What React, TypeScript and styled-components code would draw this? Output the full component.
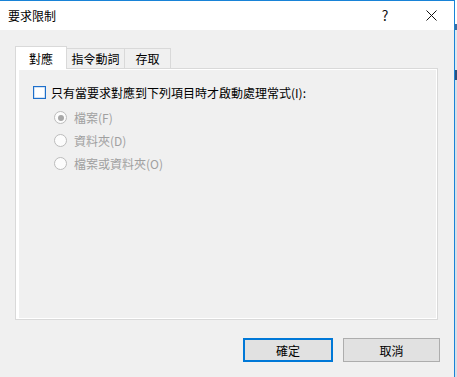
import React from 'react';
import styled, {createGlobalStyle} from "styled-components";

const GlobalStyle = createGlobalStyle`
  html, body {
    margin: 0;
    padding: 0;
    background: #f0f0f0;
  }
  * {
    box-sizing: border-box;
  }
`

const font = `"Segoe UI", "Noto Sans CJK TC", "Noto Sans", sans-serif`

export default function App() {
    return (
        <>
            <GlobalStyle/>
            <Screen>
                <Dialog>
                    <TitleBar>
                        <Title>要求限制</Title>
                        <CaptionButton>?</CaptionButton>
                        <CaptionButton>
                            <svg width="11" height="11" viewBox="0 0 11 11">
                                <path d="M0.5 0.5 L10.5 10.5 M10.5 0.5 L0.5 10.5" stroke="#111" strokeWidth="1" fill="none"/>
                            </svg>
                        </CaptionButton>
                    </TitleBar>
                    <Body>
                        <TabRow>
                            <Tab active width={52}>對應</Tab>
                            <Tab width={59}>指令動詞</Tab>
                            <Tab width={47}>存取</Tab>
                        </TabRow>
                        <Panel>
                            <PanelInner>
                                <CheckRow>
                                    <CheckBox/>
                                    <Label>只有當要求對應到下列項目時才啟動處理常式(I):</Label>
                                </CheckRow>
                                <RadioGroup>
                                    <RadioRow>
                                        <Radio checked/>
                                        <Label disabled>檔案(F)</Label>
                                    </RadioRow>
                                    <RadioRow>
                                        <Radio/>
                                        <Label disabled>資料夾(D)</Label>
                                    </RadioRow>
                                    <RadioRow>
                                        <Radio/>
                                        <Label disabled>檔案或資料夾(O)</Label>
                                    </RadioRow>
                                </RadioGroup>
                            </PanelInner>
                        </Panel>
                        <ButtonRow>
                            <Button primary width={90}>確定</Button>
                            <Button width={97}>取消</Button>
                        </ButtonRow>
                    </Body>
                </Dialog>
                <Desktop/>
            </Screen>
        </>
    );
}

const Screen = styled.div`
  display: flex;
  width: 457px;
  height: 377px;
  overflow: hidden;
  font-family: ${font};
`

const Dialog = styled.div`
  width: 455px;
  height: 377px;
  display: flex;
  flex-direction: column;
  border-top: 1px solid #1883d7;
  border-right: 1px solid #1883d7;
  background: #f0f0f0;
`

const Desktop = styled.div`
  width: 2px;
  height: 377px;
  background: linear-gradient(#ffffff 0 24px, #3b6ea0 24px 30px, #dfe7ef 30px 70px, #2d4f7a 70px 80px, #d6dee8 80px);
`

const TitleBar = styled.div`
  height: 29px;
  flex-shrink: 0;
  display: flex;
  align-items: center;
  background: #ffffff;
  padding-left: 8px;
`

const Title = styled.span`
  flex: 1;
  font-size: 12px;
  color: #000;
  margin-top: -1px;
`

const CaptionButton = styled.div`
  width: 46px;
  height: 29px;
  display: flex;
  align-items: center;
  justify-content: center;
  font-size: 14px;
  color: #111;
  margin-top: -1px;
`

const Body = styled.div`
  flex: 1;
  display: flex;
  flex-direction: column;
  padding: 16px 16px 15px 15px;
`

const TabRow = styled.div`
  display: flex;
  align-items: flex-end;
  height: 22px;
  position: relative;
  z-index: 1;
`

const Tab = styled.div<{active?: boolean; width: number}>`
  width: ${p => p.width}px;
  height: ${p => p.active ? 23 : 20}px;
  margin-bottom: ${p => p.active ? -1 : 0}px;
  margin-left: ${p => p.active ? 0 : -1}px;
  background: ${p => p.active ? '#ffffff' : '#f0f0f0'};
  border: 1px solid #d9d9d9;
  border-bottom: none;
  display: flex;
  justify-content: center;
  padding-top: ${p => p.active ? 3 : 1}px;
  font-size: 12px;
  color: #000;

  &:first-child {
    margin-left: 0;
  }
`

const Panel = styled.div`
  height: 252px;
  flex-shrink: 0;
  border: 1px solid #d9d9d9;
  background: #ffffff;
  padding: 1px 1px 1px 3px;
`

const PanelInner = styled.div`
  height: 100%;
  background: #f0f0f0;
  padding: 16px 0 0 14px;
`

const CheckRow = styled.div`
  display: flex;
  align-items: center;
  gap: 5px;
  height: 13px;
`

const CheckBox = styled.div`
  width: 13px;
  height: 13px;
  border: 1px solid #1d6fcb;
  box-shadow: inset 0 0 0 0.5px rgba(29, 111, 203, 0.4);
  background: #ffffff;
`

const Label = styled.span<{disabled?: boolean}>`
  font-size: 12px;
  line-height: 13px;
  color: ${p => p.disabled ? '#a0a0a0' : '#000'};
  white-space: nowrap;
`

const RadioGroup = styled.div`
  display: flex;
  flex-direction: column;
  gap: 10px;
  padding: 12px 0 0 21px;
`

const RadioRow = styled.div`
  display: flex;
  align-items: center;
  gap: 7px;
  height: 13px;
`

const Radio = styled.div<{checked?: boolean}>`
  width: 13px;
  height: 13px;
  border-radius: 50%;
  border: 1px solid #bcbcbc;
  background: #fcfcfc;
  display: flex;
  align-items: center;
  justify-content: center;

  &::after {
    content: "";
    display: ${p => p.checked ? 'block' : 'none'};
    width: 6px;
    height: 6px;
    border-radius: 50%;
    background: #a8a8a8;
  }
`

const ButtonRow = styled.div`
  display: flex;
  justify-content: flex-end;
  gap: 10px;
  margin: 18px -2px 0 0;
`

const Button = styled.div<{primary?: boolean; width: number}>`
  width: ${p => p.width}px;
  height: 24px;
  display: flex;
  align-items: center;
  justify-content: center;
  background: #e1e1e1;
  border: ${p => p.primary ? '2px solid #0078d7' : '1px solid #adadad'};
  font-size: 12px;
  color: #000;
`
